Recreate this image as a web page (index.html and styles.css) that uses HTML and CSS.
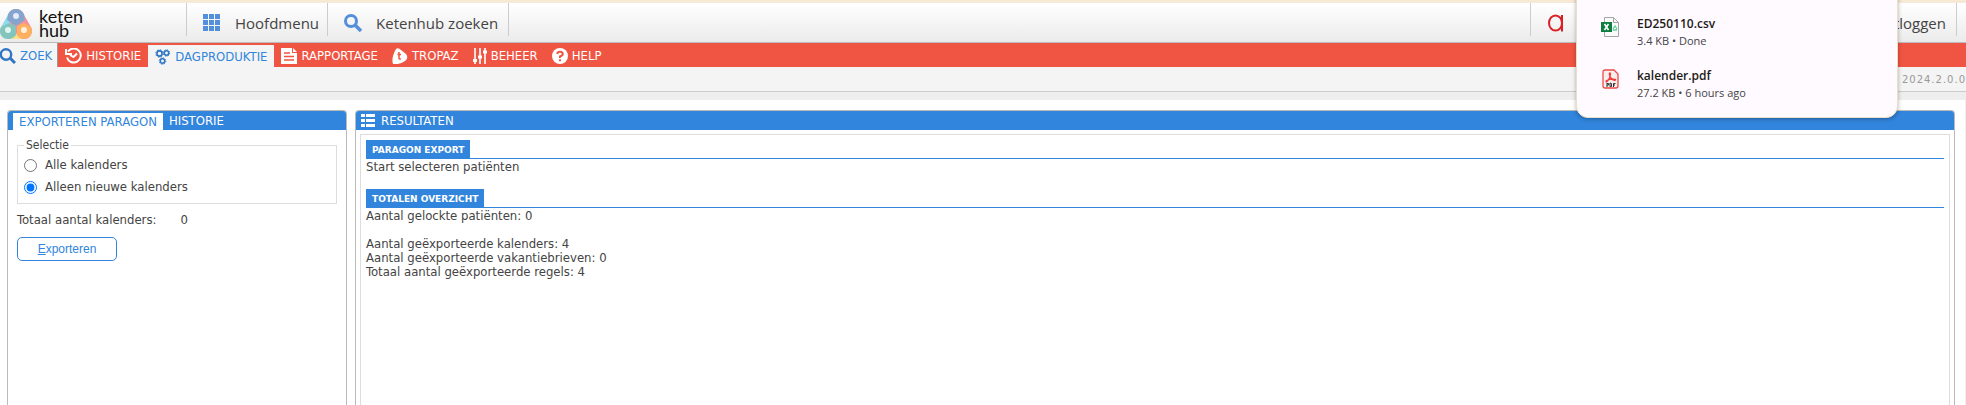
FILE: index.html
```
<!DOCTYPE html>
<html lang="nl">
<head>
    <meta charset="UTF-8">
    <meta name="viewport" content="width=device-width, initial-scale=1.0">
    <title>Ketenhub - Dagproduktie</title>
    <link rel="stylesheet" href="styles.css">
</head>
<body>
    <header class="topbar">
        <a href="#" class="logo">
            <svg width="33" height="32" viewBox="0 0 33 32">
                <path d="M8 23H24" stroke="#f9e08a" stroke-width="16" stroke-linecap="round"/>
                <path d="M16 9L8 23" stroke="#8fdcf0" stroke-width="16" stroke-linecap="round"/>
                <path d="M16 9L24 23" stroke="#f58f9b" stroke-width="16" stroke-linecap="round"/>
                <path d="M16 1Q21 1 24 6L25 12L16 18L7 12L8 6Q11 1 16 1Z" fill="#86a5ce"/>
                <path d="M1 19L9 15L16 18V27Q13 31 8 31Q0 30 0 23Z" fill="#83c5bd"/>
                <path d="M31 19L24 15L17 18L17 27Q20 31 24 31Q32 30 32 23Z" fill="#fdb160"/>
                <circle cx="16" cy="8" r="3" fill="#e3ecf8"/>
                <circle cx="8" cy="22" r="3" fill="#dff5f0"/>
                <circle cx="24" cy="22" r="3" fill="#fff0dc"/>
            </svg>
            <span>keten<br>hub</span>
        </a>
        <nav class="topmenu">
            <a href="#">
                <svg width="18" height="18" viewBox="0 0 18 18" fill="#548fdc">
                    <path d="M0 0h5v5H0zM6 0h5v5H6zM12 0h5v5h-5zM0 6h5v5H0zM6 6h5v5H6zM12 6h5v5h-5zM0 12h5v5H0zM6 12h5v5H6zM12 12h5v5h-5z"/>
                </svg>
                Hoofdmenu
            </a>
            <a href="#">
                <svg width="18" height="18" viewBox="0 0 18 18" fill="none" stroke="#548fdc">
                    <circle cx="7" cy="7" r="5.5" stroke-width="3"/>
                    <path d="M11 11l6 6" stroke-width="3.5"/>
                </svg>
                Ketenhub zoeken
            </a>
        </nav>
        <nav class="topmenu account">
            <a href="#" class="user" aria-label="Account">
                <svg width="18" height="18" viewBox="0 0 18 18" fill="none" stroke="#dc1f26" stroke-width="2">
                    <ellipse cx="8.500" cy="9" rx="6.500" ry="7.500"/>
                    <path d="M15 1v16.500"/>
                </svg>
            </a>
            <a href="#">Uitloggen</a>
        </nav>
    </header>

    <nav class="tabs">
        <a href="#" class="zoek">
            <svg width="16" height="16" viewBox="0 0 16 16" fill="none" stroke="#2f76c4">
                <circle cx="6" cy="6.500" r="5.200" stroke-width="2.400"/>
                <path d="M10 10l5 5" stroke-width="3"/>
            </svg>
            ZOEK
        </a>
        <a href="#">
            <svg width="17" height="16" viewBox="0 0 17 16" fill="none" stroke="#fff" stroke-width="2">
                <path d="M3 3.5A7 7 0 1 1 2 9.500"/>
                <path d="M1 1v5h6M5 7l3.500 2L12 5.500"/>
            </svg>
            HISTORIE
        </a>
        <a href="#" class="active">
            <svg width="16" height="16" viewBox="0 0 15 16" fill="none" stroke="#2f76c4">
                <circle cx="4" cy="4.500" r="2.600" stroke-width="1.600"/>
                <circle cx="4" cy="4.500" r="3.700" stroke-width="1" stroke-dasharray="1.500 1.400"/>
                <circle cx="11" cy="4" r="2.200" stroke-width="1.500"/>
                <circle cx="11" cy="4" r="3.200" stroke-width="1" stroke-dasharray="1.300 1.200"/>
                <circle cx="7" cy="12" r="2.200" stroke-width="1.500"/>
                <circle cx="7" cy="12" r="3.300" stroke-width="1" stroke-dasharray="1.300 1.300"/>
            </svg>
            DAGPRODUKTIE
        </a>
        <a href="#">
            <svg width="16" height="16" viewBox="0 0 16 16">
                <path d="M0 0h11v5h5v11H0z" fill="#fff"/>
                <path d="M12 0l4 4h-4z" fill="#fff"/>
                <path d="M3 5h6M3 8.500h10M3 12h10" stroke="#f05543" stroke-width="1.500"/>
            </svg>
            RAPPORTAGE
        </a>
        <a href="#">
            <svg width="16" height="16" viewBox="0 0 16 16">
                <path d="M4 1Q6-1 9 2L14 6Q17 10 13 13Q7 17 1 16Q-1 10 4 1Z" fill="#fff"/>
                <path d="M7 4v6q0 1.500 2 1M5.500 6.500h3.500" fill="none" stroke="#f05543" stroke-width="1.500"/>
            </svg>
            TROPAZ
        </a>
        <a href="#">
            <svg width="14" height="16" viewBox="0 0 14 16" stroke="#fff" fill="none">
                <path d="M2 0v16M7 0v16M12 0v16" stroke-width="1.600"/>
                <path d="M0 12.500h4M5 9h4M10 4h4" stroke-width="3"/>
            </svg>
            BEHEER
        </a>
        <a href="#">
            <svg width="16" height="16" viewBox="0 0 16 16" fill="none">
                <circle cx="8" cy="8" r="8" fill="#fff"/>
                <path d="M5.200 6q.3-2.300 2.800-2.300T10.800 6Q10.800 7.500 8 8.500V10M8 11.200v2" stroke="#f05543" stroke-width="2"/>
            </svg>
            HELP
        </a>
    </nav>

    <div class="subbar">2024.2.0.0</div>

    <main>
        <section class="panel selection">
            <div class="panel-head">
                <a href="#" class="current">EXPORTEREN PARAGON</a>
                <a href="#">HISTORIE</a>
            </div>
            <form class="export-form">
                <fieldset>
                    <legend>Selectie</legend>
                    <label><input type="radio" name="selectie" value="alle">Alle kalenders</label>
                    <label><input type="radio" name="selectie" value="nieuw" checked>Alleen nieuwe kalenders</label>
                </fieldset>
                <p class="total"><span>Totaal aantal kalenders:</span><span>0</span></p>
                <button type="button" accesskey="e"><u>E</u>xporteren</button>
            </form>
        </section>

        <section class="panel results">
            <div class="panel-head">
                <svg width="14" height="13" viewBox="0 0 14 13" fill="#fff">
                    <path d="M0 0h4v3H0zM5 0h9v3H5zM0 5h4v3H0zM5 5h9v3H5zM0 10h4v3H0zM5 10h9v3H5z"/>
                </svg>
                <h2>RESULTATEN</h2>
            </div>
            <div class="result-box">
                <div class="result">
                    <h3><span>PARAGON EXPORT</span></h3>
                    <p>Start selecteren patiënten</p>
                </div>
                <div class="result">
                    <h3><span>TOTALEN OVERZICHT</span></h3>
                    <p>Aantal gelockte patiënten: 0</p>
                    <p class="totals">
                        Aantal geëxporteerde kalenders: 4<br>
                        Aantal geëxporteerde vakantiebrieven: 0<br>
                        Totaal aantal geëxporteerde regels: 4
                    </p>
                </div>
            </div>
        </section>
    </main>

    <aside class="downloads">
        <div class="download">
            <svg width="18" height="20" viewBox="0 0 18 20">
                <path d="M3.500.5h9l5 5v14h-14z" fill="#fafafa" stroke="#a5a5a5"/>
                <path d="M12.500.5v5h5" fill="none" stroke="#a5a5a5"/>
                <path d="M12 12l2-3 2 3M12 13h4" fill="none" stroke="#5fd195" stroke-width="1.300"/>
                <rect y="5" width="11" height="10" fill="#107c41"/>
                <path d="M3.500 7l4 6M7.500 7l-4 6" stroke="#fff" stroke-width="1.600"/>
            </svg>
            <div>
                <strong>ED250110.csv</strong>
                <span>3.4 KB • Done</span>
            </div>
        </div>
        <div class="download">
            <svg width="18" height="20" viewBox="0 0 18 20">
                <path d="M4 1h9l4 4v12q0 2-2 2H4q-2 0-2-2V3q0-2 2-2z" fill="#f7eeee" stroke="#f04b46" stroke-width="1.300"/>
                <path d="M9 4q-1 0-.5 2 1 4 5 5.500 1 0 1-1-4-1-9 1-1 1 0 1.500Q9 10 9.500 5 9.500 4 9 4z" fill="none" stroke="#f03f3a" stroke-width="1.300"/>
                <path d="M6 14v4M6 14.500h1.500v1.500H6M9 14v3.500h1.500V14.500zM12.500 18v-3.500h2M12.500 16h1.500" fill="none" stroke="#333"/>
            </svg>
            <div>
                <strong>kalender.pdf</strong>
                <span>27.2 KB • 6 hours ago</span>
            </div>
        </div>
    </aside>
</body>
</html>
```
FILE: styles.css
```
* {
    box-sizing: border-box;
}
body {
    display: flex;
    flex-direction: column;
    height: 100vh;
    margin: 0;
    overflow: hidden;
    background-color: #fff;
    color: #444;
    font-family: Tahoma, "DejaVu Sans Condensed", "DejaVu Sans", sans-serif;
    font-size: 13px;
    line-height: 14px;
}
a {
    color: inherit;
    text-decoration: none;
}
svg {
    flex: none;
}
h2, h3, p {
    margin: 0;
    font-size: inherit;
    font-weight: normal;
}
.topbar {
    display: flex;
    flex: none;
    height: 43px;
    border-top: 3px solid #f6ead6;
    border-bottom: 1px solid #bbb;
    background: linear-gradient(#fff, #ebebeb);
}
.logo {
    display: flex;
    align-items: center;
    gap: 6px;
    width: 186px;
    color: #111;
    font-family: "Century Gothic", Lato, sans-serif;
    font-size: 18px;
    line-height: 14px;
}
.logo svg {
    margin-top: 2px;
}
.topmenu {
    display: flex;
    font-family: "Open Sans", sans-serif;
    font-size: 15px;
}
.topmenu a {
    display: flex;
    align-items: center;
    gap: 14px;
    height: 33px;
    padding: 6px 8px 0 16px;
    border-left: 1px solid #ccc;
}
.topmenu a:last-child {
    padding-right: 10px;
    border-right: 1px solid #ccc;
}
.account {
    margin-left: auto;
    margin-right: 9px;
}
.account .user {
    width: 332px;
}
.tabs {
    display: flex;
    flex: none;
    height: 24px;
    background-color: #f05543;
    color: #fff;
}
.tabs a {
    display: flex;
    align-items: center;
    gap: 4px;
    padding: 1px 7px 0;
}
.tabs .zoek {
    padding: 1px 5px 0 0;
    border-right: 1px solid #999;
    background-color: #f4f4f4;
    color: #3185dc;
}
.tabs .active {
    margin-top: 2px;
    background-color: #f4f4f4;
    color: #3185dc;
}
.subbar {
    flex: none;
    height: 33px;
    padding-top: 6px;
    border-bottom: 8px solid #eee;
    background-color: #f4f4f4;
    box-shadow: inset 0 -1px #ccc;
    color: #999;
    font-family: Verdana, "DejaVu Sans", sans-serif;
    font-size: 10px;
    letter-spacing: 1px;
    text-align: right;
}
main {
    display: flex;
    flex: 1;
    gap: 8px;
    padding: 10px 10px 0 7px;
    border-right: 1px solid #eee;
}
.panel {
    display: flex;
    flex-direction: column;
    border: 1px solid #bbb;
    border-bottom: 0;
    border-radius: 4px 4px 0 0;
}
.selection {
    width: 340px;
}
.results {
    flex: 1;
}
.panel-head {
    display: flex;
    align-items: center;
    height: 19px;
    padding-left: 5px;
    border-radius: 3px 3px 0 0;
    background-color: #3185dc;
    color: #fff;
}
.panel-head a {
    padding: 0 6px;
    line-height: 17px;
}
.panel-head .current {
    margin-top: 2px;
    background-color: #fff;
    color: #3185dc;
}
.panel-head h2 {
    margin-left: 6px;
}
.export-form {
    padding: 9px 9px 0;
}
fieldset {
    margin: 0;
    padding: 3px 6px 5px;
    border: 1px solid #ddd;
}
legend {
    padding: 0 2px;
    font-size: 12px;
    line-height: 12px;
}
fieldset label {
    display: flex;
    align-items: center;
    height: 22px;
}
input[type="radio"] {
    width: 13px;
    height: 13px;
    margin: 0 8px 0 0;
}
.total {
    display: flex;
    gap: 24px;
    padding: 9px 0 10px;
}
.export-form button {
    width: 100px;
    height: 24px;
    padding: 0;
    border: 1px solid #3185dc;
    border-radius: 5px;
    background-color: #fff;
    color: #3185dc;
    font-family: Arial, "Liberation Sans", sans-serif;
    font-size: 12px;
}
.result-box {
    flex: 1;
    margin: 4px 4px 0;
    padding: 5px;
    border: 1px solid #ddd;
    border-bottom: 0;
}
.result {
    margin-bottom: 15px;
}
.result h3 {
    display: flex;
    margin-bottom: 1px;
    border-bottom: 1px solid #3185dc;
}
.result h3 span {
    padding: 2px 6px 0;
    background-color: #3185dc;
    color: #fff;
    font-family: Verdana, "DejaVu Sans", sans-serif;
    font-size: 9px;
    font-weight: bold;
    line-height: 16px;
}
.totals {
    margin-top: 14px;
}
/* browser download bubble, hangs over the page */
.downloads {
    position: absolute;
    top: -12px;
    right: 68px;
    width: 322px;
    height: 130px;
    padding: 26px 24px 0;
    border: 1px solid #eadfc8;
    border-radius: 12px;
    background-color: #fefaff;
    box-shadow: 0 1px 4px rgba(0, 0, 0, 0.3);
    font-family: "Segoe UI", "Open Sans", sans-serif;
}
.download {
    display: flex;
    gap: 18px;
    height: 52px;
}
.download svg {
    margin-top: 2px;
}
.download strong, .download span {
    display: block;
    line-height: 17px;
}
.download strong {
    color: #1f1b16;
    font-size: 12px;
    font-weight: 600;
}
.download span {
    font-size: 11px;
}
```
